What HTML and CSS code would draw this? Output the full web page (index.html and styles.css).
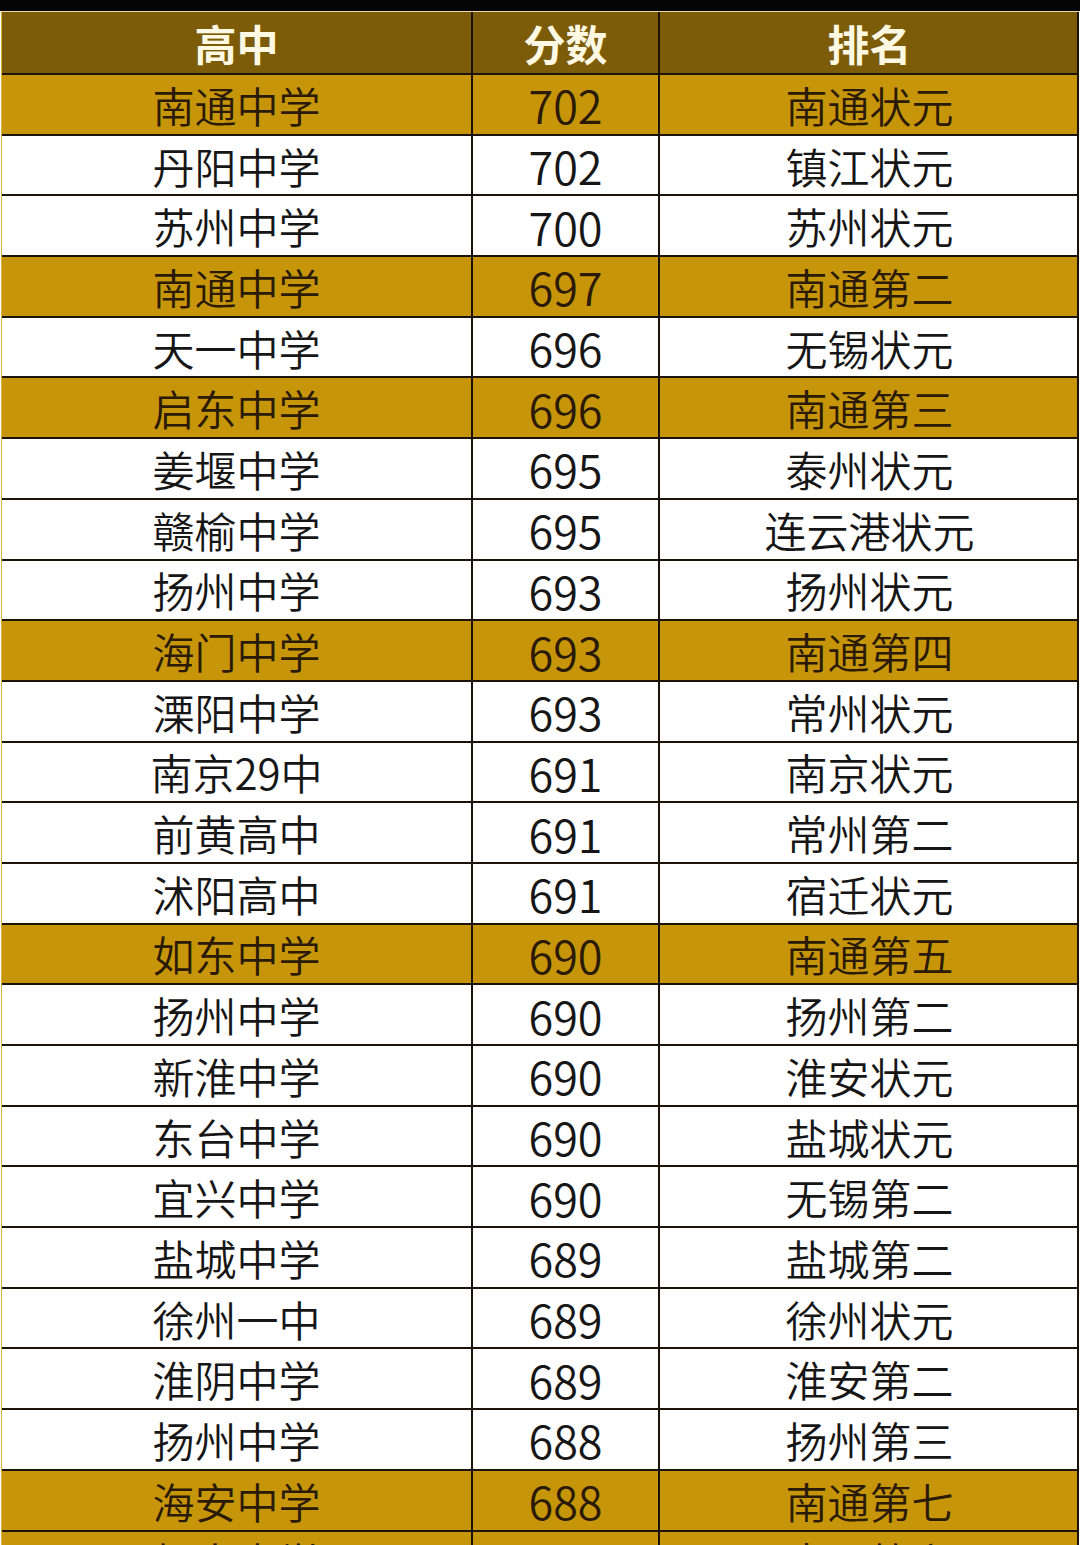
FILE: index.html
```html
<!DOCTYPE html>
<html lang="zh-CN">
<head>
<meta charset="utf-8">
<title>江苏高考状元分数</title>
<link rel="stylesheet" href="styles.css">
</head>
<body>
<div class="topband"></div>
<div class="table">
  <div class="row head"><div class="c c1">高中</div><div class="c c2">分数</div><div class="c c3">排名</div></div>
  <div class="row gold"><div class="c c1">南通中学</div><div class="c c2">702</div><div class="c c3">南通状元</div></div>
  <div class="row"><div class="c c1">丹阳中学</div><div class="c c2">702</div><div class="c c3">镇江状元</div></div>
  <div class="row"><div class="c c1">苏州中学</div><div class="c c2">700</div><div class="c c3">苏州状元</div></div>
  <div class="row gold"><div class="c c1">南通中学</div><div class="c c2">697</div><div class="c c3">南通第二</div></div>
  <div class="row"><div class="c c1">天一中学</div><div class="c c2">696</div><div class="c c3">无锡状元</div></div>
  <div class="row gold"><div class="c c1">启东中学</div><div class="c c2">696</div><div class="c c3">南通第三</div></div>
  <div class="row"><div class="c c1">姜堰中学</div><div class="c c2">695</div><div class="c c3">泰州状元</div></div>
  <div class="row"><div class="c c1">赣榆中学</div><div class="c c2">695</div><div class="c c3">连云港状元</div></div>
  <div class="row"><div class="c c1">扬州中学</div><div class="c c2">693</div><div class="c c3">扬州状元</div></div>
  <div class="row gold"><div class="c c1">海门中学</div><div class="c c2">693</div><div class="c c3">南通第四</div></div>
  <div class="row"><div class="c c1">溧阳中学</div><div class="c c2">693</div><div class="c c3">常州状元</div></div>
  <div class="row"><div class="c c1">南京29中</div><div class="c c2">691</div><div class="c c3">南京状元</div></div>
  <div class="row"><div class="c c1">前黄高中</div><div class="c c2">691</div><div class="c c3">常州第二</div></div>
  <div class="row"><div class="c c1">沭阳高中</div><div class="c c2">691</div><div class="c c3">宿迁状元</div></div>
  <div class="row gold"><div class="c c1">如东中学</div><div class="c c2">690</div><div class="c c3">南通第五</div></div>
  <div class="row"><div class="c c1">扬州中学</div><div class="c c2">690</div><div class="c c3">扬州第二</div></div>
  <div class="row"><div class="c c1">新淮中学</div><div class="c c2">690</div><div class="c c3">淮安状元</div></div>
  <div class="row"><div class="c c1">东台中学</div><div class="c c2">690</div><div class="c c3">盐城状元</div></div>
  <div class="row"><div class="c c1">宜兴中学</div><div class="c c2">690</div><div class="c c3">无锡第二</div></div>
  <div class="row"><div class="c c1">盐城中学</div><div class="c c2">689</div><div class="c c3">盐城第二</div></div>
  <div class="row"><div class="c c1">徐州一中</div><div class="c c2">689</div><div class="c c3">徐州状元</div></div>
  <div class="row"><div class="c c1">淮阴中学</div><div class="c c2">689</div><div class="c c3">淮安第二</div></div>
  <div class="row"><div class="c c1">扬州中学</div><div class="c c2">688</div><div class="c c3">扬州第三</div></div>
  <div class="row gold"><div class="c c1">海安中学</div><div class="c c2">688</div><div class="c c3">南通第七</div></div>
  <div class="row gold"><div class="c c1">如皋中学</div><div class="c c2">688</div><div class="c c3">南通第六</div></div>
</div>
</body>
</html>
```
FILE: styles.css
```css
html, body {
  margin: 0;
  padding: 0;
  background: #ffffff;
}
body {
  width: 1080px;
  height: 1545px;
  overflow: hidden;
  font-family: "Noto Sans CJK SC", "Noto Sans", sans-serif;
}
.topband {
  height: 11px;
  background: #050505;
  border-bottom: 1px solid #e9dcae;
}
.table {
  margin-left: 1px;
  width: 1077px;
  border-left: 1px solid #d8b43a;
}
.row {
  display: grid;
  grid-template-columns: 469px 2px 185px 2px 419px;
  height: 60.7px;
  box-sizing: border-box;
  border-bottom: 2px solid #1c1208;
  border-right: 2px solid #1c1208;
  background: #ffffff;
  color: #161616;
}
.c {
  display: flex;
  align-items: center;
  justify-content: center;
  font-size: 42px;
  font-weight: 350;
  line-height: 1;
  padding-top: 1px;
}
.c1 { grid-column: 1; }
.c2 {
  grid-column: 3;
  border-left: 2px solid #1c1208;
  margin-left: -2px;
  font-size: 45px;
}
.c3 {
  grid-column: 5;
  border-left: 2px solid #1c1208;
  margin-left: -2px;
}
.row.head {
  height: 63px;
  background: #7c5c08;
  color: #fff9e4;
}
.row.head .c {
  font-weight: 700;
  font-size: 42px;
}
.row.gold {
  background: #c69509;
  color: #2a1a06;
}
```
